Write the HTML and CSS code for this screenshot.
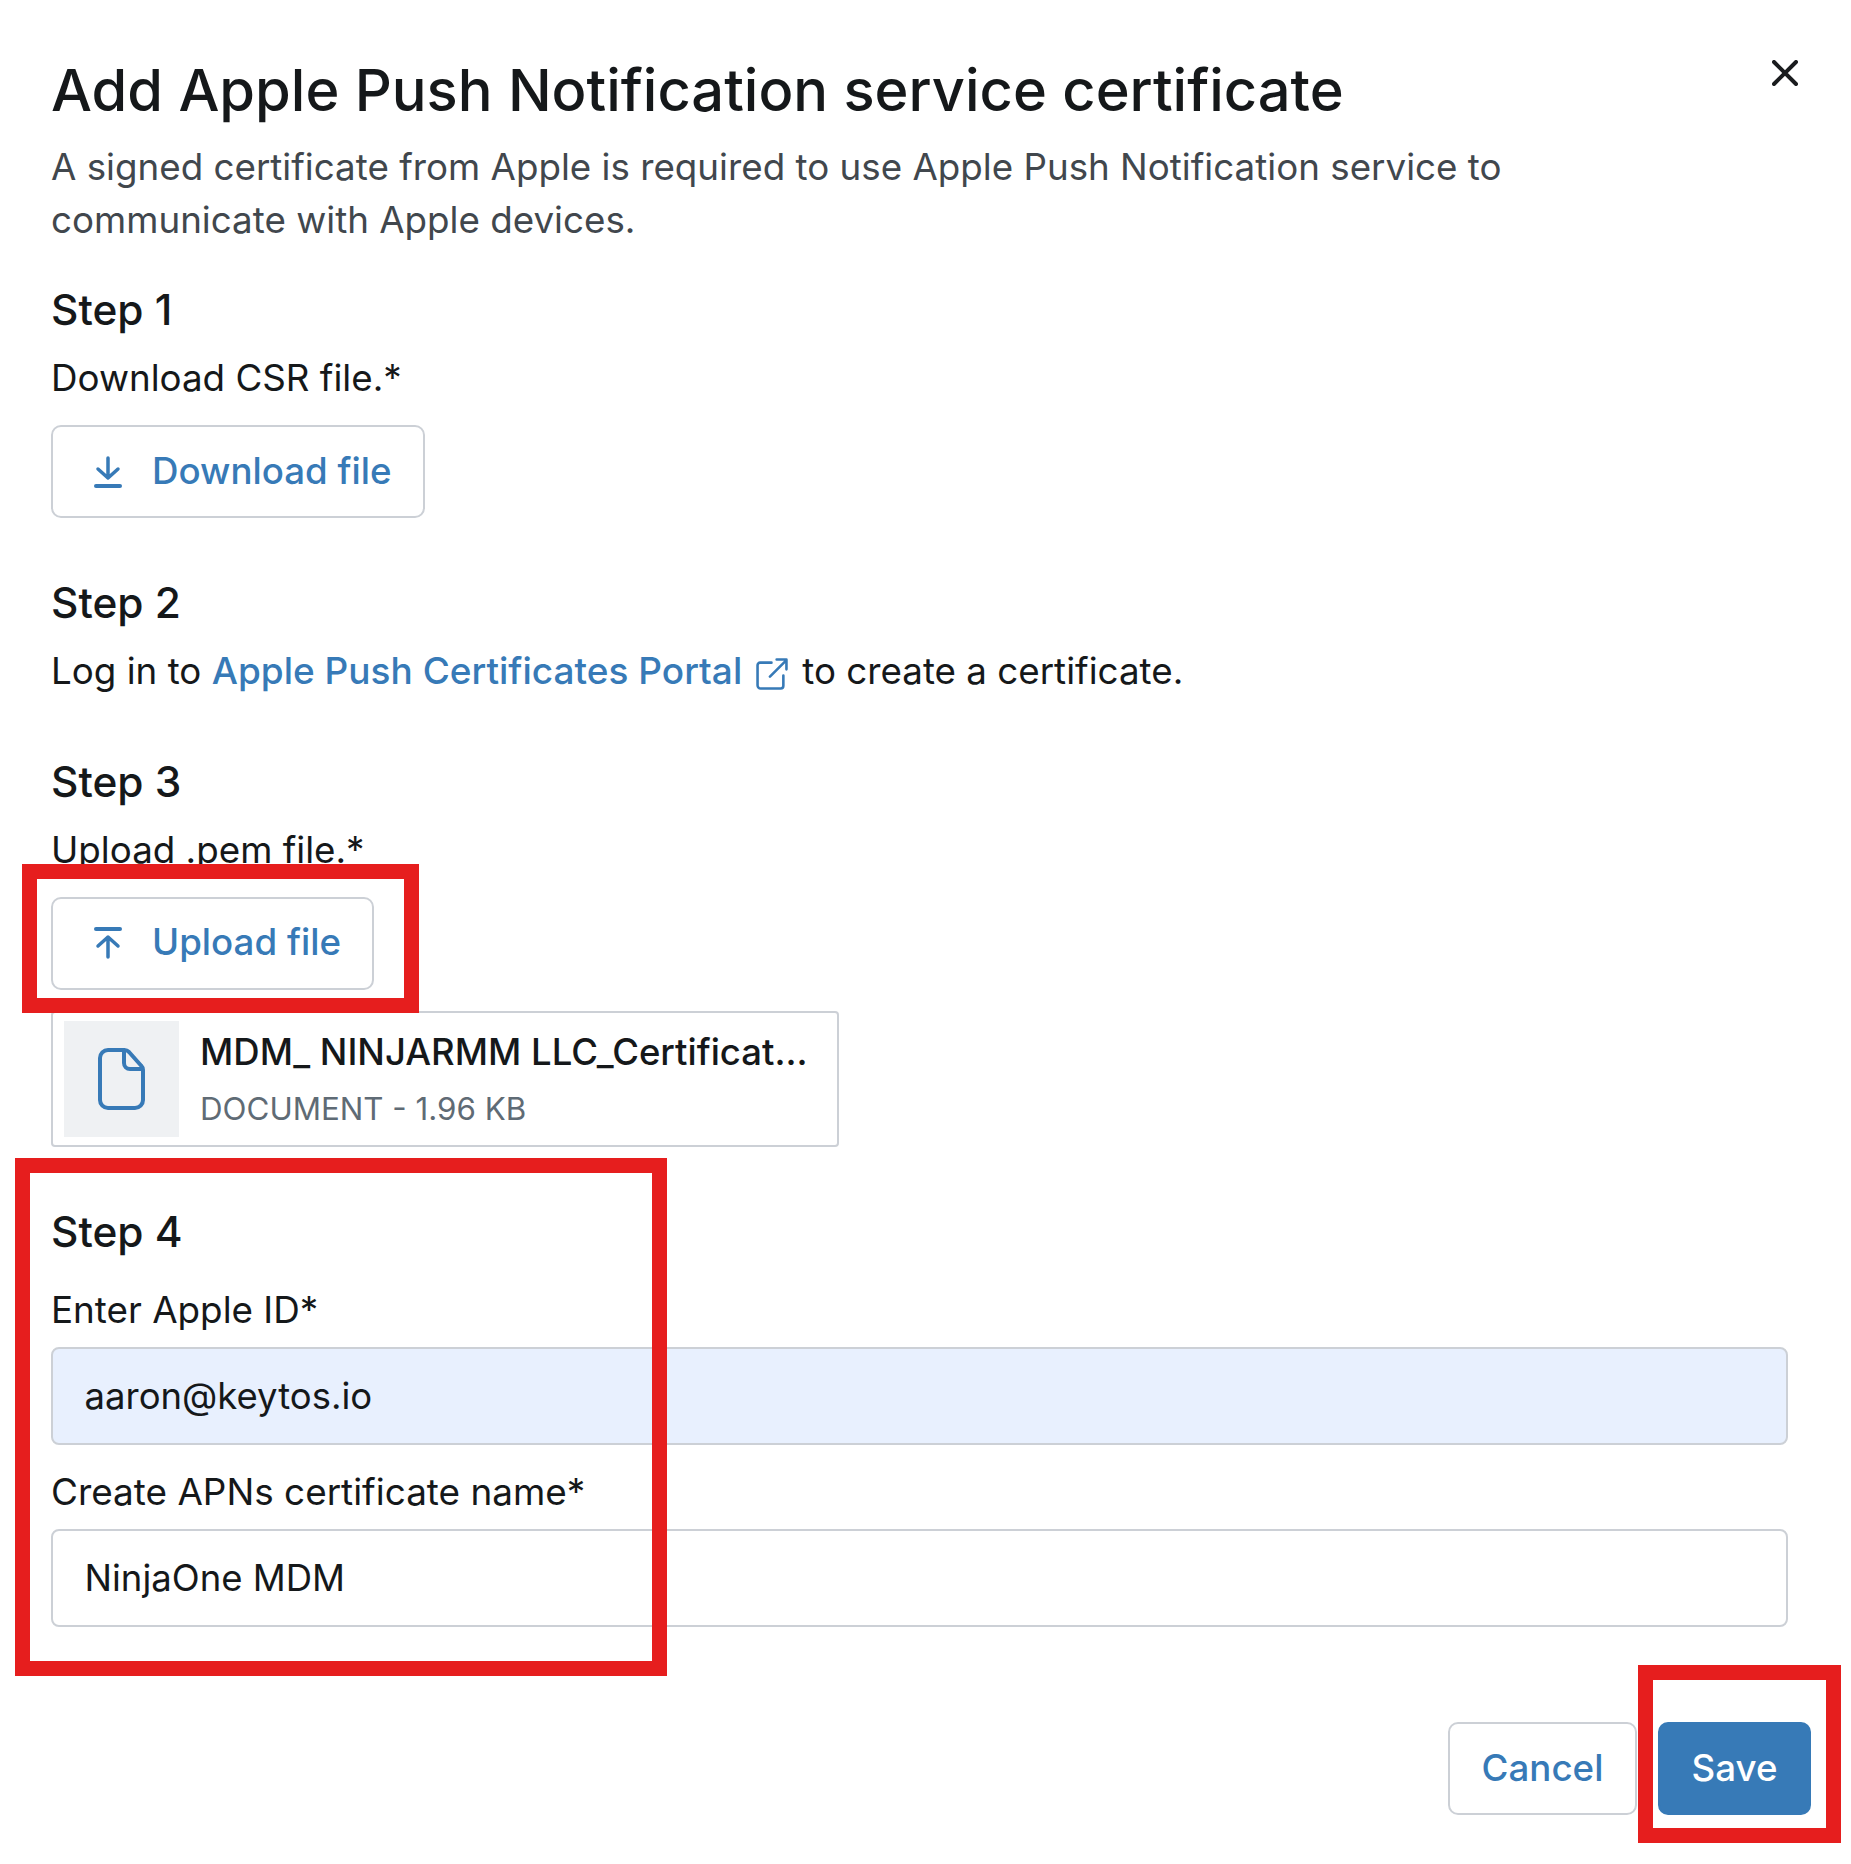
FILE: index.html
```html
<!DOCTYPE html>
<html lang="en">
<head>
<meta charset="utf-8">
<title>Add Apple Push Notification service certificate</title>
<link rel="stylesheet" href="styles.css">
</head>
<body>
<main class="dialog">
  <button class="close" aria-label="Close">
    <svg viewBox="0 0 26 26" class="close-icon"><path d="M2 2 24 24M24 2 2 24"/></svg>
  </button>
  <h1 class="title">Add Apple Push Notification service certificate</h1>
  <p class="desc">A signed certificate from Apple is required to use Apple Push Notification service to communicate with Apple devices.</p>

  <h2 class="step step-1">Step 1</h2>
  <p class="label">Download CSR file.*</p>
  <button class="btn btn-file">
    <svg viewBox="0 0 28 32" class="btn-icon"><path d="M14 2V22M4 13 14 22 24 13"/><path d="M2 30H26" class="bar"/></svg>
    <span>Download file</span>
  </button>

  <h2 class="step step-2">Step 2</h2>
  <p class="label">Log in to <a class="link" href="#">Apple Push Certificates Portal</a><svg viewBox="0 0 31 31" class="ext-icon"><path d="M15 4.500H4A2.500 2.500 0 0 0 1.500 7V26.500A3 3 0 0 0 4.500 29.500H24A2.500 2.500 0 0 0 26.500 27V17"/><path d="M13.500 18 29.500 2M20 1.500H29.500V11"/></svg>to create a certificate.</p>

  <h2 class="step step-3">Step 3</h2>
  <p class="label">Upload .pem file.*</p>
  <button class="btn btn-file">
    <svg viewBox="0 0 28 32" class="btn-icon"><path d="M2 2H26" class="bar"/><path d="M14 30V10M4 19 14 10 24 19"/></svg>
    <span>Upload file</span>
  </button>

  <div class="file-card">
    <div class="thumb">
      <svg viewBox="0 0 47 62" class="doc-icon"><path d="M10 2H26.500Q29 2 31 4L43 17.500Q45 19.500 45 22V52A8 8 0 0 1 37 60H10A8 8 0 0 1 2 52V10A8 8 0 0 1 10 2Z"/><path d="M26 2V15A6 6 0 0 0 32 21H45"/></svg>
    </div>
    <div class="file-info">
      <div class="file-name">MDM_ NINJARMM LLC_Certificat...</div>
      <div class="file-meta">DOCUMENT - 1.96 KB</div>
    </div>
  </div>

  <h2 class="step step-4">Step 4</h2>
  <label class="label label-1">Enter Apple ID*</label>
  <div class="input input-filled">aaron@keytos.io</div>
  <label class="label label-2">Create APNs certificate name*</label>
  <div class="input">NinjaOne MDM</div>

  <footer class="footer">
    <button class="btn btn-cancel">Cancel</button>
    <button class="btn btn-save">Save</button>
  </footer>
</main>

<div class="mark mark-upload"></div>
<div class="mark mark-step4"></div>
<div class="mark mark-save"></div>
</body>
</html>
```

FILE: styles.css
```css
* { box-sizing: border-box; }
html, body { margin: 0; padding: 0; background: #fff; }
body { font-family: Inter, "Noto Sans", sans-serif; color: #15181a; height: 1864px; overflow: hidden; position: relative; }

.dialog { padding: 57px 63px 0 51px; display: flex; flex-direction: column; align-items: flex-start; position: relative; }

.close { position: absolute; top: 60px; left: 1772px; width: 26px; height: 26px; padding: 0; border: 0; background: none; }
.close-icon { display: block; width: 26px; height: 26px; fill: none; stroke: #1a1c1e; stroke-width: 4; stroke-linecap: round; }

.title { margin: 0; font-size: 57.800px; line-height: 66px; font-weight: 500; color: #15181a; }
.desc { margin: 17px 0 0; width: 1500px; font-size: 36.750px; line-height: 53px; color: #41474d; }

.step { margin: 0; font-size: 42.400px; line-height: 50px; font-weight: 500; color: #15181a; }
.step-1 { margin-top: 39px; }
.step-2 { margin-top: 60px; }
.step-3 { margin-top: 59.500px; }
.step-4 { margin-top: 60px; }

.label { display: block; margin: 17px 0 0; font-size: 36.750px; line-height: 52px; }
.label-1 { margin-top: 27px; font-size: 36.800px; }
.label-2 { margin-top: 21px; font-size: 36.900px; }

.btn { font-family: inherit; font-size: 36.700px; font-weight: 500; line-height: 44px; border-radius: 10px; background: #fff; border: 2px solid #ccd0d6; color: #377ab7; }
.btn-file { display: flex; align-items: center; gap: 30px; height: 93px; margin-top: 21px; padding: 0 31px 2px 41px; }
.btn-icon { width: 28px; height: 32px; margin-top: 2px; fill: none; stroke: #377ab7; stroke-width: 3.500; stroke-linecap: round; stroke-linejoin: round; }
.btn-icon .bar { stroke-width: 4; }

.link { color: #377ab7; font-weight: 500; font-size: 37px; text-decoration: none; }
.ext-icon { display: inline-block; width: 32px; height: 32px; margin: 0 14px 0 14px; vertical-align: -6px; fill: none; stroke: #377ab7; stroke-width: 2.500; stroke-linecap: round; stroke-linejoin: round; }

.file-card { display: flex; align-items: center; gap: 21px; width: 788px; height: 136px; margin-top: 21px; padding: 0 11px; border: 2px solid #ccd0d6; border-radius: 4px; }
.thumb { flex: none; width: 115px; height: 116px; background: #eff1f3; display: flex; align-items: center; justify-content: center; }
.doc-icon { width: 47px; height: 62px; fill: none; stroke: #377ab7; stroke-width: 4; stroke-linejoin: round; }
.file-name { font-size: 36.500px; line-height: 48px; font-weight: 500; white-space: nowrap; }
.file-meta { margin-top: 12px; font-size: 31.300px; line-height: 42px; color: #5f6b75; white-space: nowrap; }

.input { width: 100%; height: 98px; margin-top: 11px; padding: 0 31.500px; display: flex; align-items: center; font-size: 36.500px; border: 2px solid #ccd0d6; border-radius: 8px; background: #fff; color: #15181a; }
.input-filled { background: #e8f0fe; }

.footer { align-self: stretch; display: flex; justify-content: flex-end; gap: 21px; margin: 95px -23px 0 0; }
.btn-cancel { width: 189px; height: 93px; padding: 0; }
.btn-save { width: 153px; height: 93px; padding: 0; background: #377ab7; border-color: #377ab7; color: #fff; }

.mark { position: absolute; border: 15px solid #e61e1e; }
.mark-upload { left: 22px; top: 864px; width: 397px; height: 149px; }
.mark-step4 { left: 15px; top: 1158px; width: 652px; height: 518px; }
.mark-save { left: 1638px; top: 1665px; width: 203px; height: 178px; }
```
